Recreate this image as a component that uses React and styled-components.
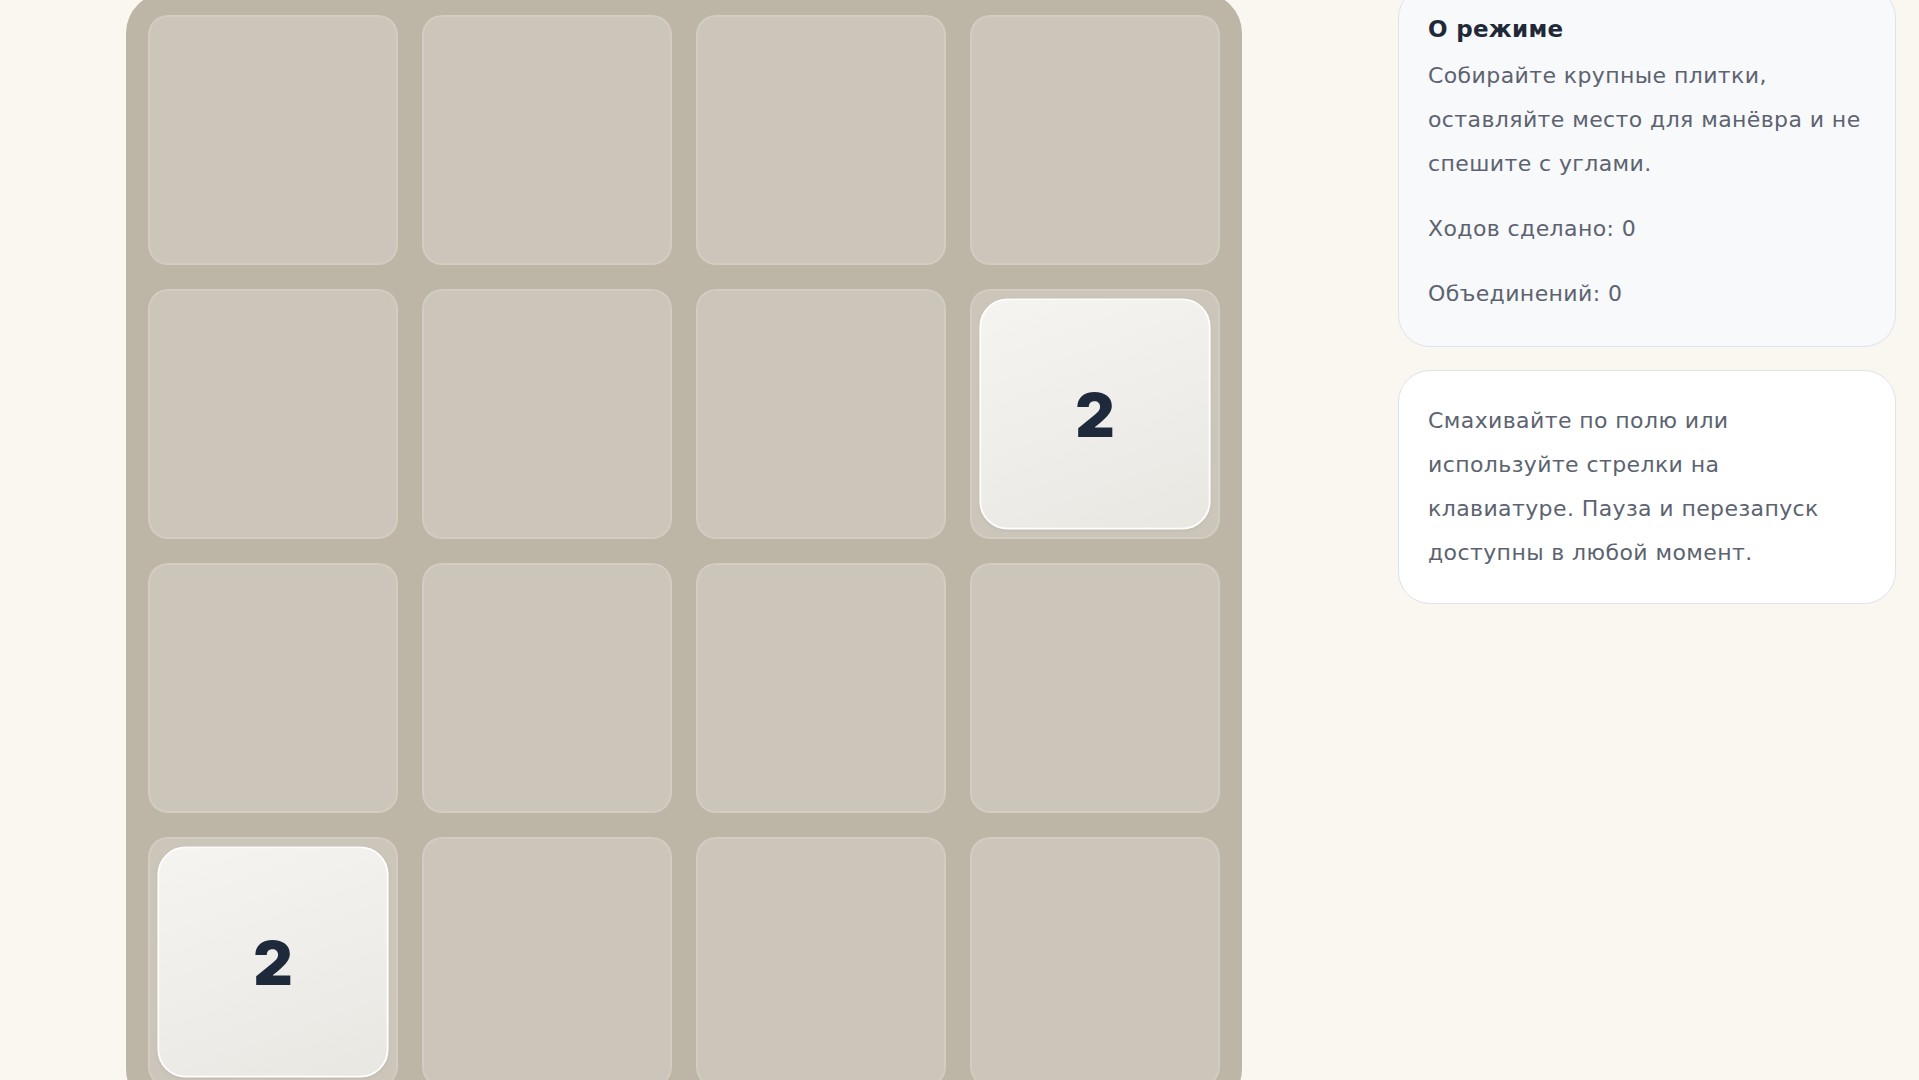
import React from "react";
import styled, { createGlobalStyle } from "styled-components";

const GlobalStyle = createGlobalStyle`
  html, body {
    margin: 0;
    padding: 0;
    background: #faf6f0;
    overflow: hidden;
  }
  body {
    font-family: "DejaVu Sans", "Noto Sans", sans-serif;
  }
  * { box-sizing: border-box; }
`;

const Page = styled.div`
  display: flex;
  align-items: flex-start;
  gap: 156px;
  padding-left: 126px;
  margin-top: -14px;
  height: 1094px;
`;

const Board = styled.div`
  flex: none;
  width: 1116px;
  margin-top: 7px;
  padding: 22px;
  background: #bdb5a6;
  border-radius: 40px;
  display: grid;
  grid-template-columns: repeat(4, 250px);
  grid-auto-rows: 250px;
  gap: 24px;
`;

const Cell = styled.div`
  background: #ccc5b9;
  border: 2px solid rgba(255, 255, 255, 0.13);
  border-radius: 20px;
  display: flex;
  align-items: center;
  justify-content: center;
`;

const Tile = styled.div`
  flex: none;
  width: 100%;
  height: 100%;
  transform: scale(0.94);
  border-radius: 30px;
  border: 2px solid rgba(255, 255, 255, 0.9);
  background: linear-gradient(160deg, #f5f4f0 0%, #eeede9 55%, #e9e7e2 100%);
  box-shadow: 0 1px 3px rgba(90, 80, 60, 0.08);
  display: flex;
  align-items: center;
  justify-content: center;
  font-family: "Inter", "DejaVu Sans", sans-serif;
  font-weight: 900;
  font-size: 65px;
  color: #1e293b;
`;

const Aside = styled.aside`
  flex: none;
  width: 498px;
  display: flex;
  flex-direction: column;
  gap: 23px;
`;

const Card = styled.section`
  background: ${(p) => (p.$muted ? "#f8f9fb" : "#ffffff")};
  border: 1px solid #dde3ea;
  border-radius: 32px;
  padding: 28px 29px ${(p) => (p.$muted ? "30px" : "28px")};
  color: #5c6370;
`;

const Title = styled.h2`
  margin: 0 0 9px;
  font-size: 23px;
  line-height: 1.3;
  font-weight: 700;
  color: #1f2937;
  letter-spacing: 0.3px;
`;

const Text = styled.p`
  margin: 0;
  font-size: 22px;
  line-height: 44px;
  letter-spacing: 0.4px;
  & + & {
    margin-top: 21px;
  }
`;

const tiles = { 7: 2, 12: 2 };

export default function App() {
  return (
    <>
      <GlobalStyle />
      <Page>
        <Board>
          {Array.from({ length: 16 }, (_, i) => (
            <Cell key={i}>{tiles[i] ? <Tile>{tiles[i]}</Tile> : null}</Cell>
          ))}
        </Board>
        <Aside>
          <Card $muted>
            <Title>О режиме</Title>
            <Text>
              Собирайте крупные плитки, оставляйте место для манёвра и не
              спешите с углами.
            </Text>
            <Text>Ходов сделано: 0</Text>
            <Text>Объединений: 0</Text>
          </Card>
          <Card>
            <Text>
              Смахивайте по полю или используйте стрелки на клавиатуре. Пауза и
              перезапуск доступны в любой момент.
            </Text>
          </Card>
        </Aside>
      </Page>
    </>
  );
}
